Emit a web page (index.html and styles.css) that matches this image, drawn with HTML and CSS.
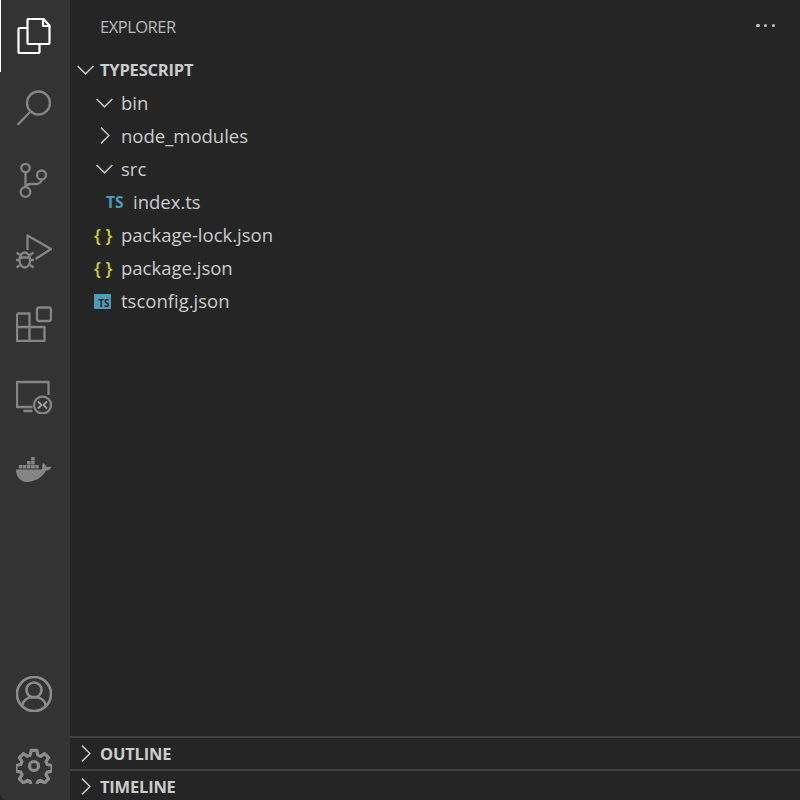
FILE: index.html
```html
<!DOCTYPE html>
<html lang="en">
<head>
<meta charset="utf-8">
<title>Explorer</title>
<link rel="stylesheet" href="styles.css">
</head>
<body>
<div class="app">
  <nav class="activity">
    <div class="act act-active">
      <svg class="ico" viewBox="0 0 36 36"><path class="white" d="M10.500 10H2.500a1 1 0 0 0-1 1v23a1 1 0 0 0 1 1h19a1 1 0 0 0 1-1v-8"/><path class="white" d="M11.500 1h15l6 6.500V25a1 1 0 0 1-1 1h-20a1 1 0 0 1-1-1V2a1 1 0 0 1 1-1z"/><path class="white" d="M26 1v7h6.500"/></svg>
    </div>
    <div class="act">
      <svg class="ico" viewBox="0 0 36 36"><circle class="s" cx="22.500" cy="13" r="11.500"/><path class="s" d="M14 22L1.500 35"/></svg>
    </div>
    <div class="act">
      <svg class="ico" viewBox="0 0 36 36"><circle class="s" cx="9.500" cy="6" r="4.200"/><circle class="s" cx="25.500" cy="13" r="4.500"/><circle class="s" cx="9.500" cy="30" r="4.800"/><path class="s" d="M9.500 10.200v15M9.500 26C10 23 12 22 15 22h5c3 0 5-1.500 6-4.500"/></svg>
    </div>
    <div class="act">
      <svg class="ico" viewBox="0 0 36 36"><path class="s" d="M11.500 16V1.500L35 15L19.500 25"/><ellipse class="s" cx="8.800" cy="26" rx="5.300" ry="7.500"/><path class="s" d="M3.500 26H0M14 26H18M4 21l-3.500-2.500M14 21l3.500-2.500M4 31l-3.500 2.500M14 31l3.500 2.500M3.500 23.500h10.500"/></svg>
    </div>
    <div class="act">
      <svg class="ico" viewBox="0 0 36 36"><path class="s" d="M1 9a1.500 1.500 0 0 1 1.500-1.500H13.500V21H28.500V35H1z M1 21H13.500V35"/><rect class="s" x="21" y="1.500" width="14" height="13.500" rx="2"/></svg>
    </div>
    <div class="act">
      <svg class="ico" viewBox="0 0 36 36"><path class="s" d="M16.500 29H1V4H32.500V17M7.500 33h9"/><circle class="s" cx="26.500" cy="27" r="8.500"/><path class="s2" d="M22 23.500l3.500 3.500L22 30.500M31 23.500L27.500 27l3.500 3.500"/></svg>
    </div>
    <div class="act">
      <svg class="ico" viewBox="0 0 36 36"><path class="f" d="M0 19.500H26c0-2 0-4 1-6.500 2 1 3 2.500 3.500 4 1.500-.5 3-.5 5 0-1 2-3 3.500-5.500 3.500C27 27 19 32 11 32 4 32 0 26 0 19.500z"/><path class="f" d="M2.800 15h3.600v3.600H2.800zM6.900 15h3.600v3.600H6.900zM11 15h3.600v3.600H11zM15.100 15h3.600v3.600h-3.600zM19.200 15h3.600v3.600h-3.600zM11 11h3.600v3.600H11zM15.100 11h3.600v3.600h-3.600zM15.100 7h3.600v3.600h-3.600z"/></svg>
    </div>
    <div class="spacer"></div>
    <div class="act act-lit">
      <svg class="ico" viewBox="0 0 36 36"><circle class="s" cx="18" cy="18" r="17"/><circle class="s" cx="18" cy="14" r="7.500"/><path class="s" d="M6 30c1-6 6-9 12-9s11 3 12 9"/></svg>
    </div>
    <div class="act act-lit">
      <svg class="ico" viewBox="0 0 36 36"><path class="gear" d="M15.200 2.400h5.600l1 4.700 2.800 1.200 4-2.600 4 4-2.600 4 1.200 2.800 4.700 1v5.600l-4.700 1-1.200 2.800 2.600 4-4 4-4-2.600-2.800 1.200-1 4.700h-5.600l-1-4.700-2.800-1.200-4 2.600-4-4 2.600-4-1.200-2.800-4.700-1v-5.600l4.700-1 1.200-2.800-2.600-4 4-4 4 2.600 2.800-1.200z"/><circle class="gear" cx="18" cy="18" r="4.500"/></svg>
    </div>
  </nav>
  <main class="side">
    <header class="title">
      <span class="title-text">EXPLORER</span>
      <span class="dots"><i></i><i></i><i></i></span>
    </header>
    <section class="tree">
      <div class="row head">
        <svg class="chev" viewBox="0 0 24 24"><path d="M3 8l9 9 9-9"/></svg>
        <span class="head-text">TYPESCRIPT</span>
      </div>
      <div class="row lvl1">
        <svg class="chev" viewBox="0 0 24 24"><path d="M3 8l9 9 9-9"/></svg>
        <span class="name">bin</span>
      </div>
      <div class="row lvl1">
        <svg class="chev" viewBox="0 0 24 24"><path d="M8 3l9 9-9 9"/></svg>
        <span class="name">node_modules</span>
      </div>
      <div class="row lvl1">
        <svg class="chev" viewBox="0 0 24 24"><path d="M3 8l9 9 9-9"/></svg>
        <span class="name">src</span>
      </div>
      <div class="row lvl2">
        <span class="ts">TS</span>
        <span class="name">index.ts</span>
      </div>
      <div class="row lvl1">
        <span class="json">{ }</span>
        <span class="name">package-lock.json</span>
      </div>
      <div class="row lvl1">
        <span class="json">{ }</span>
        <span class="name">package.json</span>
      </div>
      <div class="row lvl1">
        <span class="tsbox"><span>TS</span></span>
        <span class="name">tsconfig.json</span>
      </div>
    </section>
    <section class="pane">
      <svg class="chev" viewBox="0 0 24 24"><path d="M8 3l9 9-9 9"/></svg>
      <span class="head-text">OUTLINE</span>
    </section>
    <section class="pane">
      <svg class="chev" viewBox="0 0 24 24"><path d="M8 3l9 9-9 9"/></svg>
      <span class="head-text">TIMELINE</span>
    </section>
  </main>
</div>
<div class="corner"></div>
</body>
</html>
```
FILE: styles.css
```css
* { box-sizing: border-box; }
html, body { margin: 0; height: 100%; background: #252526; }
body { font-family: "Open Sans", "Noto Sans", sans-serif; color: #cccccc; overflow: hidden; }
.app { display: flex; width: 800px; height: 802px; }

.activity { width: 70px; flex: none; background: #333333; display: flex; flex-direction: column; }
.act { height: 72px; display: flex; align-items: center; justify-content: center; padding-right: 2px; }
.act-active { border-left: 1px solid #ffffff; }
.spacer { flex: 1; }
.ico { width: 36px; height: 36px; display: block; stroke-linejoin: round; }
.s { fill: none; stroke: #858585; stroke-width: 2.3; }
.act-lit .s { stroke: #8c8c8c; stroke-width: 2.6; }
.s2 { fill: none; stroke: #a0a0a0; stroke-width: 1.8; }
.white { fill: none; stroke: #ffffff; stroke-width: 2.2; }
.f { fill: #858585; }
.gear { fill: none; stroke: #8c8c8c; stroke-width: 3.200; }
.corner { position: absolute; left: 0; top: 792px; width: 6px; height: 8px; background: radial-gradient(ellipse 6px 8px at 100% 0, transparent 96%, #232323 100%); }

.side { flex: 1; min-width: 0; background: #252526; display: flex; flex-direction: column; }
.title { height: 53px; flex: none; display: flex; align-items: center; justify-content: space-between; padding: 0 25px 0 30px; }
.title-text { font-size: 16.500px; color: #bbbbbb; letter-spacing: -0.500px; }
.dots { display: flex; gap: 4.200px; margin-bottom: 2px; }
.dots i { width: 3.500px; height: 3.500px; border-radius: 50%; background: #c5c5c5; display: block; }

.tree { flex: 1; }
.row { height: 33px; display: flex; align-items: center; font-size: 18.500px; color: #cccccc; white-space: nowrap; }
.head { padding-left: 4.500px; }
.lvl1 { padding-left: 24px; }
.lvl2 { padding-left: 36px; }
.chev { width: 21px; height: 21px; flex: none; fill: none; stroke: #c5c5c5; stroke-width: 1.700; margin-right: 6px; }
.head .chev { margin-right: 4.500px; }
.name { display: block; }
.head-text { font-size: 16.500px; font-weight: 700; color: #cccccc; letter-spacing: -0.200px; }

.ts { width: 27px; flex: none; font-size: 15.500px; font-weight: 700; color: #519aba; }
.json { width: 27px; flex: none; font-size: 18px; font-weight: 600; color: #cbcb41; }
.tsbox { width: 17px; height: 15px; flex: none; margin: 1px 10px 0 0; background: #519aba; border-radius: 1px; display: flex; align-items: flex-end; justify-content: flex-end; padding: 0 1.500px 1.500px 0; }
.tsbox span { font-size: 10px; line-height: 8px; font-weight: 700; color: #252526; }

.pane { height: 33px; flex: none; border-top: 2px solid #414141; display: flex; align-items: center; padding-left: 5px; }
.pane .chev { margin-right: 4px; }
```
